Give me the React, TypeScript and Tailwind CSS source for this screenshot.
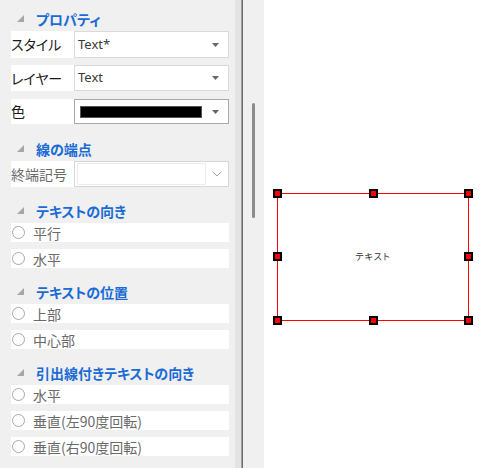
import React from "react";

const JP = { fontFamily: '"Noto Sans CJK JP", "Noto Sans", sans-serif', fontFeatureSettings: '"palt"' } as React.CSSProperties;

function Header({ text, mt }: { text: string; mt: string }) {
  return (
    <div className={`flex h-[20px] items-center ${mt} mb-[2px]`}>
      <svg width="7" height="7" viewBox="0 0 7 7" className="ml-[6px] mt-[-2px]">
        <polygon points="7,0 7,7 0,7" fill="#a6a6a6" />
      </svg>
      <span className="ml-[12px] text-[14px] font-bold text-[#1a6bd6] leading-none">{text}</span>
    </div>
  );
}

function Arrow() {
  return (
    <svg width="7" height="4" viewBox="0 0 7 4" className="mr-[9px]">
      <polygon points="0,0 7,0 3.5,4" fill="#666" />
    </svg>
  );
}

function SelectRow({ label, value, h, mt }: { label: string; value: string; h: string; mt: string }) {
  return (
    <div className={`flex ${h} ${mt} bg-white`}>
      <div className="w-[63px] flex items-center text-[14px] text-[#1a1a1a]">{label}</div>
      <div className="flex-1 flex items-center border border-[#dadada] bg-white">
        <span className="ml-[3px] flex-1 text-[13px] text-[#3a3a3a]" style={{ fontFamily: '"Noto Sans", sans-serif' }}>{value}</span>
        <Arrow />
      </div>
    </div>
  );
}

function Radio({ text, mt }: { text: string; mt: string }) {
  return (
    <div className={`flex h-[19px] items-center bg-white ${mt}`}>
      <span className="ml-[1px] w-[13px] h-[13px] rounded-full border border-[#a8a8a8] bg-white" />
      <span className="ml-[8px] text-[14px] text-[#6a6a6a] leading-none">{text}</span>
    </div>
  );
}

function Handle({ x, y }: { x: number; y: number }) {
  return (
    <div
      className="absolute w-[9px] h-[9px] border-2 border-black bg-[#ff0000]"
      style={{ left: x - 4, top: y - 4 }}
    />
  );
}

export default function App() {
  return (
    <div className="flex w-[492px] h-[468px] overflow-hidden bg-white" style={JP}>
      <div className="w-[235px] h-full bg-[#f0f0f0] pl-[11px] pr-[6px] pt-[9px]">
        <Header text="プロパティ" mt="mt-0" />
        <SelectRow label="スタイル" value="Text*" h="h-[27px]" mt="mt-[1px]" />
        <SelectRow label="レイヤー" value="Text" h="h-[26px]" mt="mt-[7px]" />
        <div className="flex h-[25px] mt-[8px] bg-white">
          <div className="w-[63px] flex items-center text-[14px] text-[#1a1a1a]">色</div>
          <div className="flex-1 flex items-center border border-[#a9a9a9] bg-white">
            <div className="ml-[5px] w-[122px] h-[12px] bg-black border border-[#555]" />
            <div className="flex-1" />
            <Arrow />
          </div>
        </div>

        <Header text="線の端点" mt="mt-[15px]" />
        <div className="flex h-[26px] bg-white">
          <div className="w-[63px] flex items-center text-[14px] text-[#6a6a6a] whitespace-nowrap">終端記号</div>
          <div className="flex-1 flex border border-[#d6d6d6] bg-white">
            <div className="w-[129px] my-[1px] ml-[2px] border border-[#ececec]" />
            <div className="flex-1 flex items-center justify-center">
              <svg width="10" height="6" viewBox="0 0 10 6">
                <polyline points="0.5,0.5 5,5 9.5,0.5" fill="none" stroke="#a0a0a0" strokeWidth="1" />
              </svg>
            </div>
          </div>
        </div>

        <Header text="テキストの向き" mt="mt-[14px]" />
        <Radio text="平行" mt="mt-0" />
        <Radio text="水平" mt="mt-[7px]" />

        <Header text="テキストの位置" mt="mt-[14px]" />
        <Radio text="上部" mt="mt-0" />
        <Radio text="中心部" mt="mt-[7px]" />

        <Header text="引出線付きテキストの向き" mt="mt-[14px]" />
        <Radio text="水平" mt="mt-0" />
        <Radio text="垂直(左90度回転)" mt="mt-[7px]" />
        <Radio text="垂直(右90度回転)" mt="mt-[7px]" />
      </div>

      <div className="w-[6px] h-full bg-[#e4e4e4]" />
      <div className="w-[1px] h-full bg-[#a0a0a0]" />
      <div className="w-[1px] h-full bg-[#6b6b6b]" />

      <div className="w-[21px] h-full bg-[#f0f0f0] pl-[9px] pt-[103px]">
        <div className="w-[3px] h-[115px] rounded-full bg-[#8c8c8c]" />
      </div>

      <div className="relative flex-1 h-full bg-white">
        <div className="absolute left-[13px] top-[193px] w-[192px] h-[128px] border-[1.5px] border-[#ff0000] flex items-center justify-center">
          <span className="text-[9px] text-[#333] tracking-[1px]">テキスト</span>
        </div>
        <Handle x={13} y={193} />
        <Handle x={109} y={193} />
        <Handle x={204} y={193} />
        <Handle x={13} y={256} />
        <Handle x={204} y={256} />
        <Handle x={13} y={320} />
        <Handle x={109} y={320} />
        <Handle x={204} y={320} />
      </div>
    </div>
  );
}
